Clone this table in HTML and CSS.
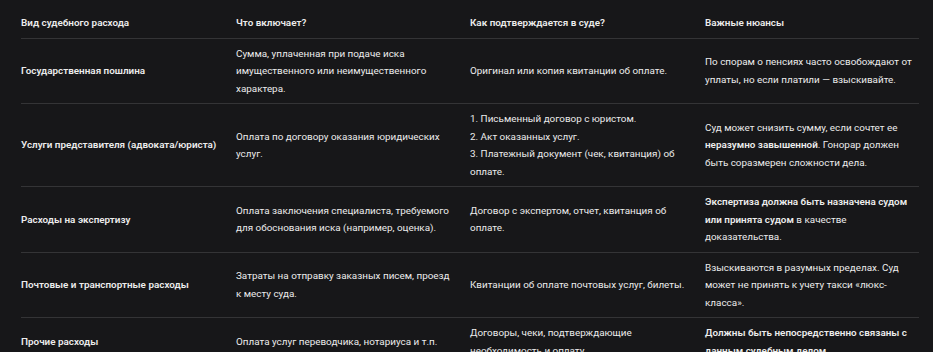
FILE: index.html
```html
<!DOCTYPE html>
<html lang="ru">
<head>
<meta charset="utf-8">
<link rel="stylesheet" href="styles.css">
</head>
<body>
<div class="wrap">
<table class="costs">
<colgroup>
<col class="c1"><col class="c2"><col class="c3"><col class="c4">
</colgroup>
<thead>
<tr>
<th>Вид судебного расхода</th>
<th>Что включает?</th>
<th>Как подтверждается в суде?</th>
<th>Важные нюансы</th>
</tr>
</thead>
<tbody>
<tr>
<td><strong>Государственная пошлина</strong></td>
<td>Сумма, уплаченная при подаче иска имущественного или неимущественного характера.</td>
<td>Оригинал или копия квитанции об оплате.</td>
<td>По спорам о пенсиях часто освобождают от уплаты, но если платили — взыскивайте.</td>
</tr>
<tr>
<td><strong>Услуги представителя (адвоката/юриста)</strong></td>
<td>Оплата по договору оказания юридических услуг.</td>
<td>1. Письменный договор с юристом.<br>2. Акт оказанных услуг.<br>3. Платежный документ (чек, квитанция) об оплате.</td>
<td>Суд может снизить сумму, если сочтет ее <strong>неразумно завышенной</strong>. Гонорар должен быть соразмерен сложности дела.</td>
</tr>
<tr>
<td><strong>Расходы на экспертизу</strong></td>
<td>Оплата заключения специалиста, требуемого для обоснования иска (например, оценка).</td>
<td>Договор с экспертом, отчет, квитанция об оплате.</td>
<td><strong>Экспертиза должна быть назначена судом или принята судом</strong> в качестве доказательства.</td>
</tr>
<tr>
<td><strong>Почтовые и транспортные расходы</strong></td>
<td>Затраты на отправку заказных писем, проезд к месту суда.</td>
<td>Квитанции об оплате почтовых услуг, билеты.</td>
<td>Взыскиваются в разумных пределах. Суд может не принять к учету такси «люкс-класса».</td>
</tr>
<tr>
<td><strong>Прочие расходы</strong></td>
<td>Оплата услуг переводчика, нотариуса и т.п.</td>
<td>Договоры, чеки, подтверждающие необходимость и оплату.</td>
<td><strong>Должны быть непосредственно связаны с данным судебным делом.</strong></td>
</tr>
</tbody>
</table>
</div>
</body>
</html>
```

FILE: styles.css
```css
html, body {
  margin: 0;
  padding: 0;
  background: #171719;
}
body {
  font-family: Roboto, "Liberation Sans", sans-serif;
  font-size: 9.9px;
  line-height: 17.5px;
  color: #ececec;
}
.wrap {
  padding: 8px 14px 0 21px;
}
.costs {
  width: 898px;
  table-layout: fixed;
  border-collapse: collapse;
}
.c1 { width: 209px; }
.c2 { width: 234px; }
.c3 { width: 235px; }
.c4 { width: 220px; }
.costs th,
.costs td {
  padding: 6px 13px 6px 6px;
  text-align: left;
  vertical-align: middle;
  border-bottom: 1px solid #343436;
}
.costs th:first-child,
.costs td:first-child {
  padding-left: 0;
  padding-right: 6px;
}
.costs th:last-child,
.costs td:last-child {
  padding-right: 0;
}
.costs th {
  font-weight: 600;
}
.costs strong {
  font-weight: 600;
}
```
